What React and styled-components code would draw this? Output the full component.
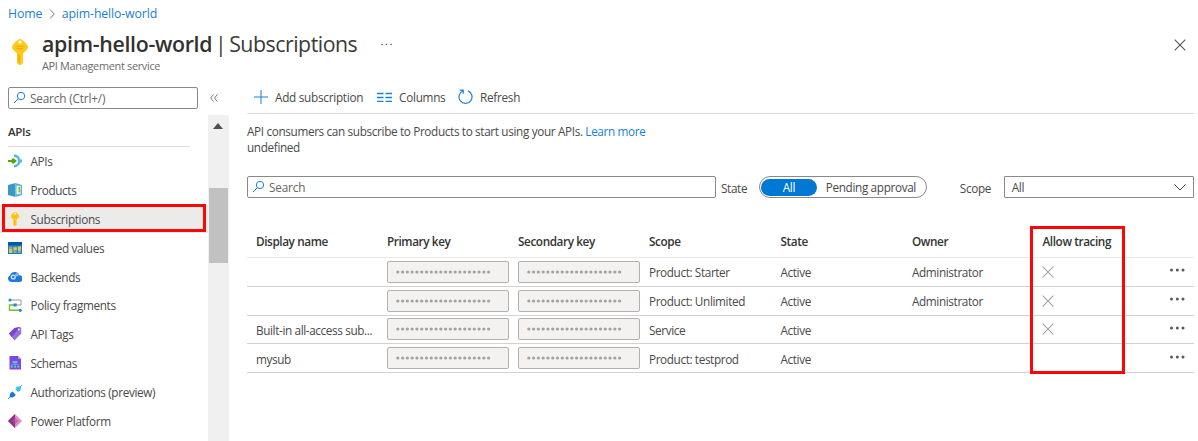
import React from "react";
import styled, { createGlobalStyle } from "styled-components";

const Global = createGlobalStyle`
  *{box-sizing:border-box}
  body{margin:0;background:#fff;overflow:hidden}
`;
const Page = styled.div`
  width:1198px;height:441px;overflow:hidden;display:flex;flex-direction:column;background:#fff;
  font-family:"Open Sans","Noto Sans",sans-serif;font-size:11.75px;line-height:16px;color:#4a4948;letter-spacing:-.35px;
`;
const Crumbs = styled.nav`
  height:28px;padding:0 8px;display:flex;align-items:center;color:#1a80d9;font-size:12.3px;letter-spacing:-.13px;
  svg{margin:0 7px 0 6.500px}
`;
const Link = styled.span`color:#1a80d9;white-space:nowrap;`;
const Header = styled.header`
  height:58px;display:flex;padding:0 12px 0 11px;
`;
const HeaderIcon = styled.div`width:31px;padding-top:11px;svg{display:block}`;
const Titles = styled.div`width:315px;white-space:nowrap;`;
const Title = styled.h1`
  margin:0;font-size:21.3px;line-height:31px;font-weight:400;color:#3b3a39;letter-spacing:-.47px;word-spacing:-2.2px;
  b{font-weight:600;letter-spacing:-.3px;color:#323130}
`;
const Subtitle = styled.div`font-size:10.9px;line-height:14px;color:#6b6a69;letter-spacing:-.3px;`;
const More = styled.div`margin-left:24px;padding-top:15px;svg{display:block}`;
const Close = styled.div`margin-left:auto;padding-top:11px;svg{display:block}`;
const Body = styled.div`flex:1;display:flex;min-height:0;`;
const Side = styled.aside`width:229px;display:flex;flex-direction:column;`;
const SideTop = styled.div`height:29px;display:flex;padding:1px 0 0 8px;svg{flex:none}`;
const SearchBox = styled.div`
  width:${p => p.$w}px;height:22px;border:1px solid #8a8988;border-radius:2px;display:flex;align-items:center;
  gap:4px;padding:0 0 1px 4px;color:#666564;flex:none;letter-spacing:-.15px;
`;
const Collapse = styled.div`padding:7px 0 0 12px;svg{display:block}`;
const SideBody = styled.div`flex:1;display:flex;min-height:0;`;
const Menu = styled.div`width:208px;display:flex;flex-direction:column;`;
const MenuHead = styled.div`
  margin:0 18px 0 8px;height:32px;border-bottom:1px solid #dddcdb;font-weight:600;font-size:11.5px;padding-top:9px;flex:none;color:#333;
`;
const Item = styled.div`
  height:28.8px;flex:none;display:flex;align-items:center;padding:0 0 0 8px;gap:8.500px;
  background:${p => p.$on ? "#edebe9" : "transparent"};position:relative;white-space:nowrap;
  svg{flex:none;width:14px;height:14px}
`;
const Mark = styled.div`
  position:absolute;border:3px solid #fb0505;pointer-events:none;
  left:${p => p.$x}px;top:${p => p.$y}px;width:${p => p.$w}px;height:${p => p.$h}px;
`;
const Scroll = styled.div`width:21px;background:#f0f0f0;display:flex;flex-direction:column;align-items:center;`;
const Arrow = styled.div`width:0;height:0;margin:8px 1px 0 0;border:5.5px solid transparent;border-top:0;border-bottom:6px solid #505050;`;
const Thumb = styled.div`width:19px;height:75px;margin-top:59px;background:#c1c1c1;`;
const Main = styled.main`width:947px;margin-left:18px;display:flex;flex-direction:column;`;
const Toolbar = styled.div`height:28px;border-bottom:1px solid #dddcdb;display:flex;padding:0 0 5px 7px;letter-spacing:-.27px;`;
const Tool = styled.div`
  display:flex;align-items:center;gap:7px;margin-right:14px;white-space:nowrap;width:${p => p.$w}px;
  svg{flex:none}
`;
const Intro = styled.p`margin:10px 0 0;height:52px;line-height:15.5px;`;
const Filters = styled.div`height:22px;display:flex;`;
const Label = styled.div`padding-top:4px;width:${p => p.$w}px;margin-left:${p => p.$ml}px;`;
const Pills = styled.div`
  width:168px;height:22px;border:1px solid #8a8988;border-radius:11px;padding:0 1px;display:flex;align-items:center;white-space:nowrap;
`;
const Pill = styled.div`
  width:${p => p.$on ? 56 : 108}px;height:17px;border-radius:9px;background:${p => p.$on ? "#0078d4" : "transparent"};
  color:${p => p.$on ? "#fff" : "inherit"};line-height:17px;text-align:center;
`;
const Select = styled.div`
  width:191px;height:22px;border:1px solid #8a8988;border-radius:1px;display:flex;align-items:center;justify-content:space-between;padding:0 7px 0 7px;
`;
const Table = styled.div`margin-top:27px;display:flex;flex-direction:column;position:relative;`;
const Row = styled.div`
  display:grid;grid-template-columns:131px 131px 131px 131.5px 131.5px 130.5px 126.5px 1fr;
  height:${p => p.$head ? 33 : 28.75}px;border-bottom:1px solid ${p => p.$head ? "#eae9e8" : "#d3d2d1"};
  font-weight:${p => p.$head ? 600 : 400};padding-left:9px;white-space:nowrap;align-items:center;
  color:${p => p.$head ? "#333" : "inherit"};letter-spacing:${p => p.$head ? -0.4 : -0.38}px;
`;
const Cell = styled.div`padding-top:1px;`;
const TracingCell = styled.div`svg{display:block;margin-left:-1px}`;
const HeadCell = styled.div`padding-top:0;`;
const Actions = styled.div`padding-bottom:3px;svg{display:block}`;
const Key = styled.div`
  width:122px;height:22px;border:1px solid #b3b1af;border-radius:2px;background:#f3f2f1;display:flex;align-items:center;padding-left:8px;
`;

const Magnifier = () => (
  <svg width="13" height="13" viewBox="0 0 13 13" fill="none" stroke="#1a80d9"><circle cx="8" cy="5" r="3.7" /><path d="M5.3 7.7L1 12" /></svg>
);
const KeyIcon = ({ w = 18, h = 26 }) => (
  <svg width={w} height={h} viewBox="0 0 18 26">
    <path fill="#ffca1c" d="M9 0C7.500 0 6 1.300 4 3.300 2 5.300 1 6.700 1 8.200c0 2 2 3.400 5 6.300V23.500C6 25 7.500 26 9 26s3-1 3-2.500V14.500c3-2.900 5-4.300 5-6.300 0-1.500-1-2.900-3-4.900S10.500 0 9 0Z" />
    <path fill="#f9ac12" d="M4.500 6.800h9v1.200h-9zM5.500 9h7v1.200h-7zM7 15.500h2v8.800L7 23z" /><circle cx="9" cy="3" r="1.600" fill="#fff" />
  </svg>
);
const Cross = ({ c = "#a3a2a1" }) => (
  <svg width="12" height="12" viewBox="0 0 12 12" fill="none" stroke={c} strokeWidth="1.100"><path d="M.7.7l10.600 10.600M11.300.7L.7 11.300" /></svg>
);
const Dots = () => (
  <svg width="16" height="4" viewBox="0 0 16 4" fill="#5a5958"><circle cx="2.500" cy="2" r="1.500" /><circle cx="8.300" cy="2" r="1.500" /><circle cx="14" cy="2" r="1.500" /></svg>
);
const Secret = () => (
  <Key><svg width="97" height="4" viewBox="0 0 97 4" fill="#a3a19f">{Array.from({ length: 20 }, (_, i) => <circle key={i} cx={1.8 + i * 4.78} cy="2" r="1.600" />)}</svg></Key>
);

const icons = {
  APIs: <svg viewBox="0 0 14 14"><path d="M6 1.600a5.200 5.200 0 0 1 0 10.600" fill="none" stroke="#59b9e6" strokeWidth="2.600" /><path d="M11.300 5.500H14v3h-2.700z" fill="#59b9e6" /><path d="M0 5.900h3.500C3.700 4.800 4.500 4.300 5.500 4.300L9 7 5.500 9.700C4.500 9.700 3.700 9.200 3.500 8.100H0z" fill="#57a300" /></svg>,
  Products: <svg viewBox="0 0 14 14"><path d="M0 2l7.500-2v14L0 12z" fill="#3999c6" /><path d="M7.500 0L14 2v10l-6.500 2z" fill="#59b4d9" /><path d="M8.500 2.500l4.300.7v7.600l-4.300.7z" fill="#f4fafd" /><path d="M10.600 4h1.600v5.500h-1.600z" fill="#7fba00" /></svg>,
  "Named values": <svg viewBox="0 0 14 14"><path d="M0 1h14v12H0z" fill="#0f7fd0" /><path d="M0 1h14v3.300H0z" fill="#005ba1" /><path d="M1 5.500h3.300V12H1zM5.400 5.500h3.300V12H5.400zM9.800 5.500H13V12H9.800z" fill="#93a98e" /><path d="M1 8h3.300v4H1zM5.400 6.500h3.300V9H5.400zM9.800 5.500H13V9.500H9.800z" fill="#e2c35a" /></svg>,
  Backends: <svg viewBox="0 0 14 14"><path d="M3.500 12A3.400 3.400 0 0 1 2 5.500a4.900 4.900 0 0 1 9.300-.3A3.400 3.400 0 0 1 11 12z" fill="#2179d5" /><circle cx="5.300" cy="7" r="1.900" fill="none" stroke="#c6e4ff" strokeWidth="1.400" /><circle cx="9" cy="4.800" r="1.100" fill="none" stroke="#c6e4ff" strokeWidth=".9" /></svg>,
  "Policy fragments": <svg viewBox="0 0 14 14" fill="none"><path d="M3 2h10v5H8" stroke="#9a9a9a" /><path d="M6 7H1.500v5.300H12" stroke="#76bc2d" strokeWidth="1.400" /><path d="M5.500 5.500h3.200v3H5.500z" fill="#1591d6" /><circle cx="2" cy="2" r="1.500" fill="#1591d6" /><circle cx="12.300" cy="12.300" r="1.600" fill="#1591d6" /></svg>,
  "API Tags": <svg viewBox="0 0 14 14"><path d="M1 6.500L6.500 1 12 0l1.200 1v5.500L6.500 13.500z" fill="#9a6fd8" /><path d="M1 6.500L6.500 1 12 0 3.800 10z" fill="#7b45d0" /><circle cx="10.800" cy="2.500" r=".9" fill="#fff" /></svg>,
  Schemas: <svg viewBox="0 0 14 14"><path d="M1.500 0H10l3 3v10.500H1.500z" fill="#8444e0" /><path d="M10 0l3 3h-3z" fill="#b796f9" /><path d="M4.500 5h5v2.200h-5zM2.700 9.700h2v2h-2zM6 9.700h2v2H6zM9.300 9.700h2v2h-2z" fill="#4fc8d0" /><path d="M3.700 10V8.400h6.600V10M7 7v3" stroke="#4fc8d0" strokeWidth=".7" fill="none" /></svg>,
  "Authorizations (preview)": <svg viewBox="0 0 14 14"><path d="M13.800.2l-2 2M.2 13.800l2-2" stroke="#2a9be0" /><path d="M7.300 4.300l1.200-2.200c1.300-.8 3-1 4.500-.8.1 1.700 0 3.200-.9 4.500L10 7z" fill="#3cc4ee" /><path d="M4.500 6.500L7.700 9.700c-.7 1.700-2.200 2.500-3.800 2.700L1.700 12.300c-.3-2.500.6-4.800 2.800-5.800z" fill="#1a78d4" /></svg>,
  "Power Platform": <svg viewBox="0 0 14 14"><path d="M7 0l7 7-7 7-7-7z" fill="#e18cc8" /><path d="M7 0v14L0 7z" fill="#8c3080" /><path d="M7 3.500L10.500 7 7 10.500z" fill="#c964b0" /><path d="M7 3.500v7L3.500 7z" fill="#a64296" /></svg>,
  Subscriptions: <KeyIcon w={14} h={14} />,
};
const menu = ["APIs", "Products", "Subscriptions", "Named values", "Backends", "Policy fragments", "API Tags", "Schemas", "Authorizations (preview)", "Power Platform"];
const rows = [
  ["", "Product: Starter", "Administrator", true],
  ["", "Product: Unlimited", "Administrator", true],
  ["Built-in all-access sub...", "Service", "", true],
  ["mysub", "Product: testprod", "", false],
];
const columns = ["Display name", "Primary key", "Secondary key", "Scope", "State", "Owner", "Allow tracing", ""];

export default function App() {
  return (
    <Page>
      <Global />
      <Crumbs><Link>Home</Link><svg width="6" height="10" viewBox="0 0 6 10" fill="none" stroke="#777"><path d="M1 .5L5.300 5 1 9.500" /></svg><Link>apim-hello-world</Link></Crumbs>
      <Header>
        <HeaderIcon><KeyIcon /></HeaderIcon>
        <Titles><Title><b>apim-hello-world</b> | Subscriptions</Title><Subtitle>API Management service</Subtitle></Titles>
        <More><svg width="12" height="3" fill="#555"><circle cx="1" cy="1.500" r=".8" /><circle cx="5.500" cy="1.500" r=".8" /><circle cx="10" cy="1.500" r=".8" /></svg></More>
        <Close><Cross c="#555" /></Close>
      </Header>
      <Body>
        <Side>
          <SideTop><SearchBox $w={190}><Magnifier />Search (Ctrl+/)</SearchBox><Collapse><svg width="8" height="8" fill="none" stroke="#777"><path d="M3.500.5L.7 4l2.800 3.500M7.300.5L4.500 4l2.800 3.500" /></svg></Collapse></SideTop>
          <SideBody>
            <Menu>
              <MenuHead>APIs</MenuHead>
              {menu.map(m => <Item key={m} $on={m === "Subscriptions"}>{icons[m]}<span>{m}</span>{m === "Subscriptions" && <Mark $x={2} $y={-0.6} $w={204} $h={28} />}</Item>)}
            </Menu>
            <Scroll><Arrow /><Thumb /></Scroll>
          </SideBody>
        </Side>
        <Main>
          <Toolbar>
            <Tool $w={109}><svg width="14" height="14" stroke="#1a80d9"><path d="M7 0v14M0 7h14" /></svg>Add subscription</Tool>
            <Tool $w={67}><svg width="15" height="10" stroke="#1a80d9" strokeWidth="1.300"><path d="M0 1.500h6.500M8.500 1.500H15M0 5.500h6.500M8.500 5.500H15M0 9.300h6.500M8.500 9.300H15" /></svg>Columns</Tool>
            <Tool $w={62}><svg width="15" height="16" viewBox="0 0 15 16" fill="none" stroke="#1a80d9" strokeWidth="1.200"><path d="M10 1.900A6.500 6.500 0 1 1 4.800 2M1.800 1.200H5.200v3.500" /></svg>Refresh</Tool>
          </Toolbar>
          <Intro>API consumers can subscribe to Products to start using your APIs. <Link>Learn more</Link><br />undefined</Intro>
          <Filters>
            <SearchBox $w={469}><Magnifier />Search</SearchBox>
            <Label $w={38} $ml={5}>State</Label>
            <Pills><Pill $on>All</Pill><Pill>Pending approval</Pill></Pills>
            <Label $w={44} $ml={33}>Scope</Label>
            <Select>All<svg width="12" height="7" fill="none" stroke="#444"><path d="M.5.5L6 6 11.500.5" /></svg></Select>
          </Filters>
          <Table>
            <Row $head>{columns.map((h, i) => <HeadCell key={i}>{h}</HeadCell>)}</Row>
            {rows.map(([n, s, o, x], i) => (
              <Row key={i}><Cell>{n}</Cell><Secret /><Secret /><Cell>{s}</Cell><Cell>Active</Cell><Cell>{o}</Cell><TracingCell>{x && <Cross />}</TracingCell><Actions><Dots /></Actions></Row>
            ))}
            <Mark $x={783} $y={1} $w={95} $h={148} />
          </Table>
        </Main>
      </Body>
    </Page>
  );
}
